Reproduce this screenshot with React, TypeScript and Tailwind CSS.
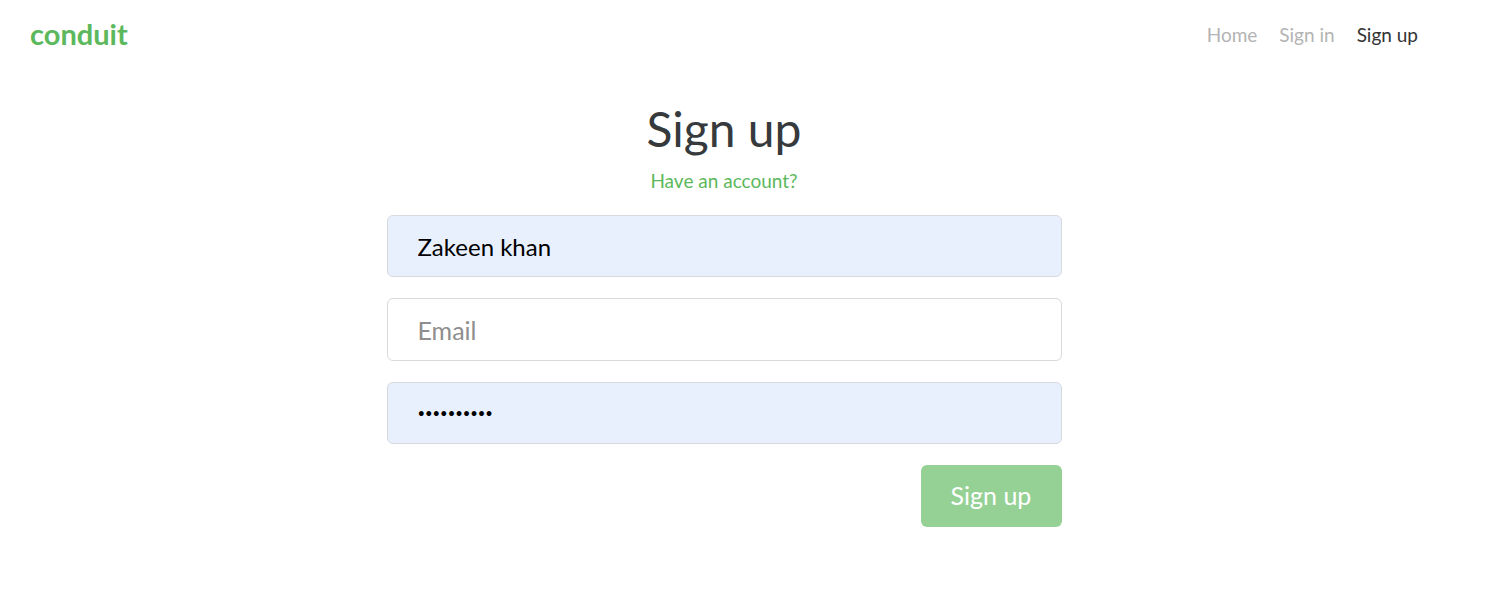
import React from "react";

export default function App() {
  const font = { fontFamily: "Lato, 'Noto Sans', sans-serif" };

  return (
    <div className="min-h-[598px] w-full bg-white" style={font}>
      <div className="w-[1448px]">
        <nav className="flex items-center justify-between h-[68px] pl-[30px] pr-[30px]">
          <a className="text-[29px] font-bold text-[#5cb85c] leading-none -mt-[2px]">
            conduit
          </a>
          <ul className="flex items-center gap-[22px] text-[19px] leading-none">
            <li className="text-[#b3b3b3]">Home</li>
            <li className="text-[#b3b3b3]">Sign in</li>
            <li className="text-[#333]">Sign up</li>
          </ul>
        </nav>

        <div className="w-[675px] mx-auto flex flex-col pt-[33px]">
          <h1 className="text-center text-[48px] leading-[55px] text-[#373a3c] mb-[10px]">
            Sign up
          </h1>
          <p className="text-center text-[19px] leading-[30px] text-[#5cb85c] mb-[19px]">
            Have an account?
          </p>

          <form className="flex flex-col gap-[21px]">
            <input
              type="text"
              defaultValue="Zakeen khan"
              className="h-[62px] w-full rounded-[6px] border border-[#d6d9de] bg-[#e8f0fe] px-[30px] text-[24px] text-black outline-none"
            />
            <input
              type="text"
              placeholder="Email"
              className="h-[63px] w-full rounded-[6px] border border-[#d9d9d9] bg-white px-[30px] text-[25px] text-black placeholder-[#8e8e8e] outline-none"
            />
            <input
              type="password"
              defaultValue="zakeenkhan"
              className="h-[62px] w-full rounded-[6px] border border-[#d6d9de] bg-[#e8f0fe] px-[30px] text-[13px] text-black outline-none"
            />
            <div className="flex justify-end">
              <button
                type="button"
                className="h-[62px] w-[141px] rounded-[6px] bg-[#95d195] text-[25px] text-white"
              >
                Sign up
              </button>
            </div>
          </form>
        </div>
      </div>
    </div>
  );
}
